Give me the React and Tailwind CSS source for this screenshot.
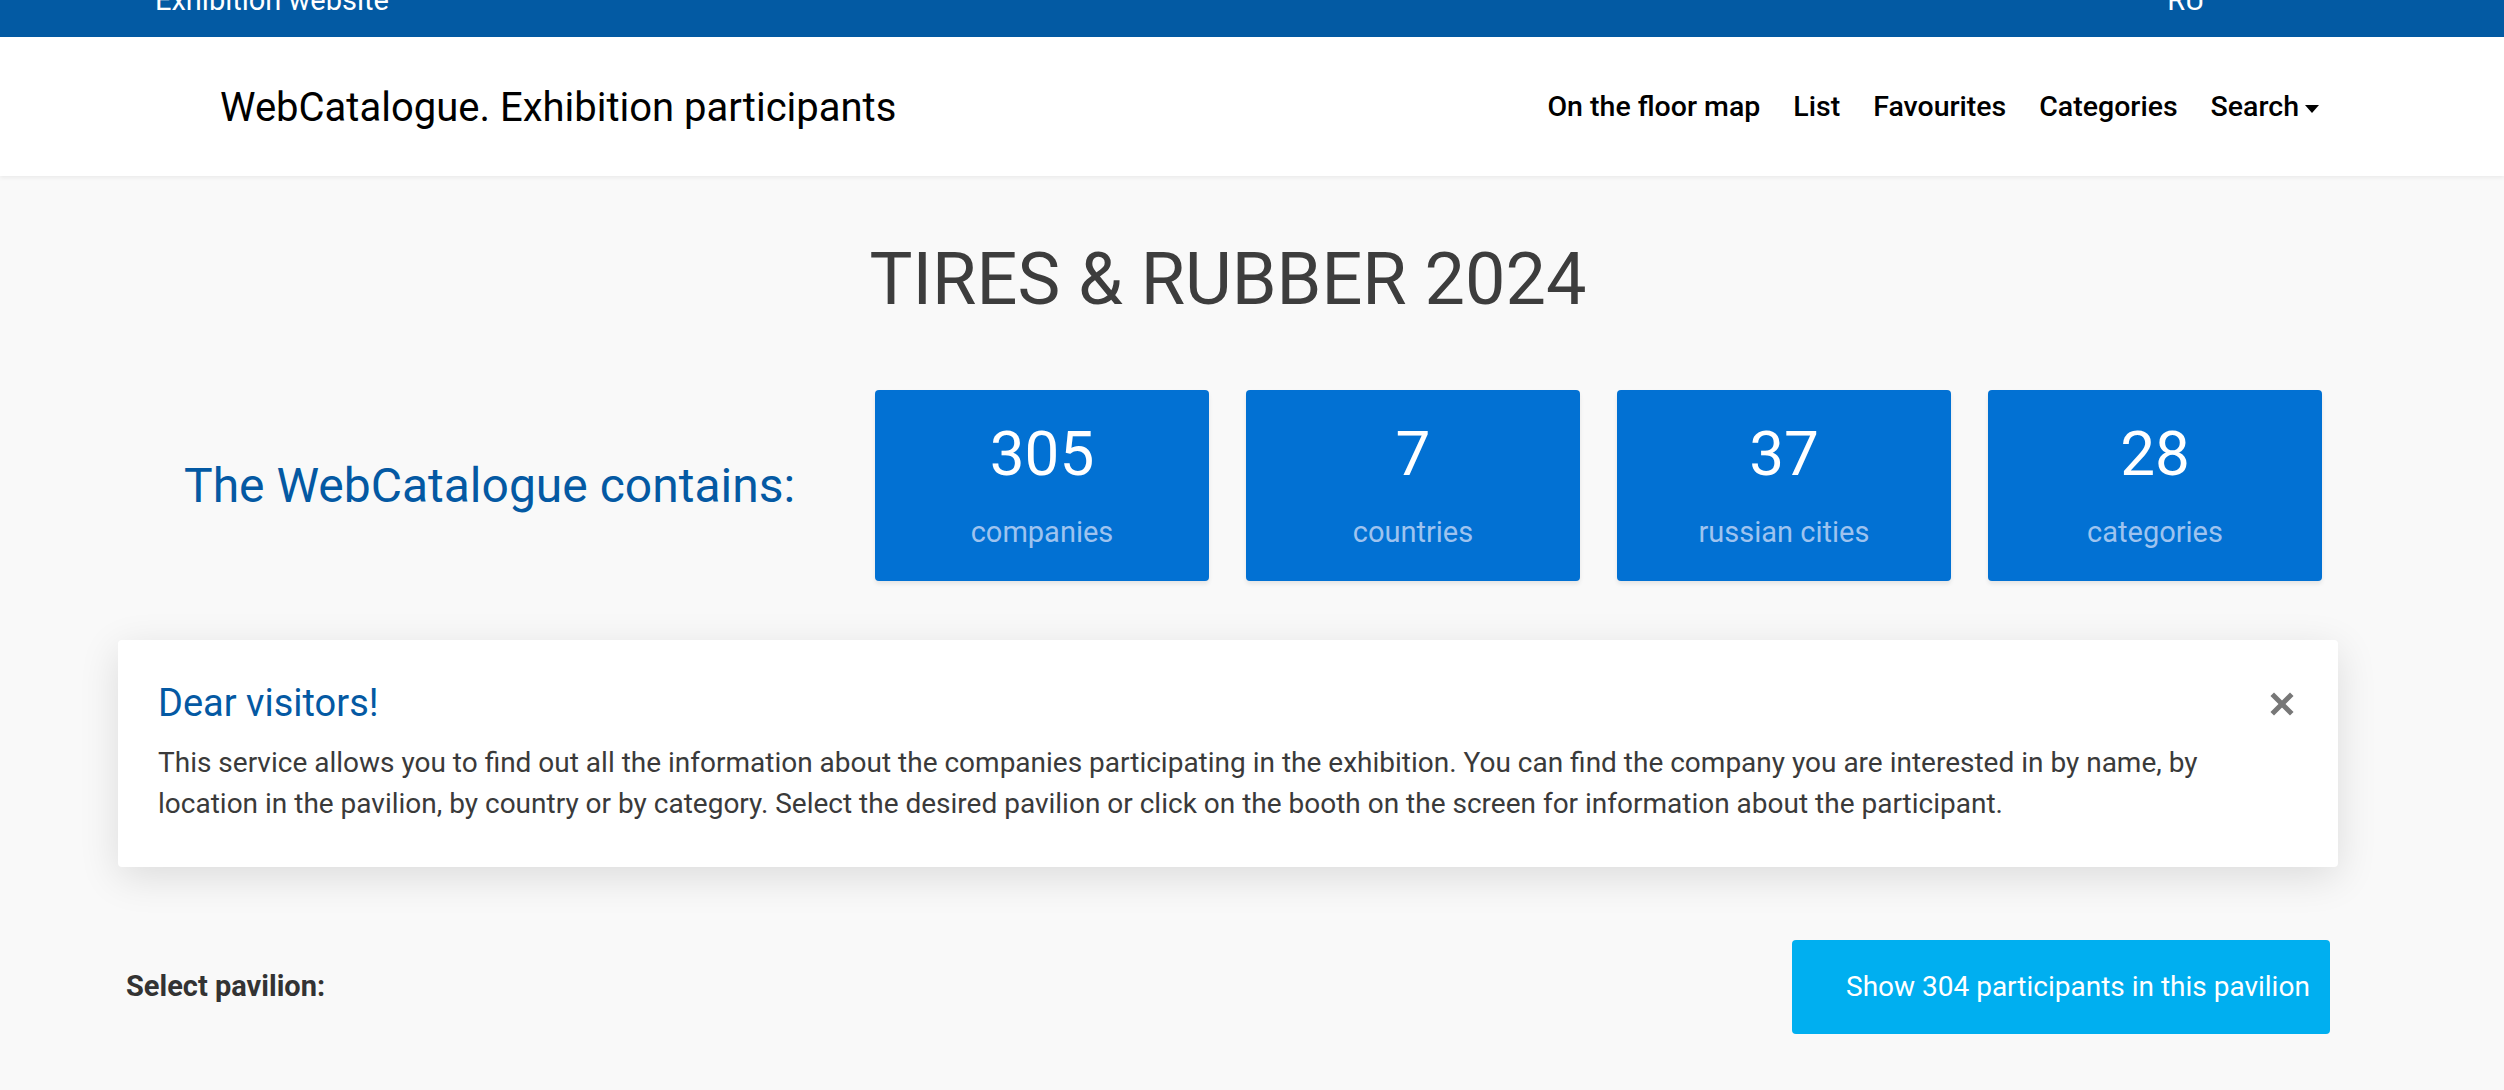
const stats = [
  { value: '305', label: 'companies' },
  { value: '7', label: 'countries' },
  { value: '37', label: 'russian cities' },
  { value: '28', label: 'categories' },
]

const navItems = ['On the floor map', 'List', 'Favourites', 'Categories']

export default function App() {
  return (
    <div
      className="h-[1090px] overflow-hidden bg-[#f9f9f9] text-[#333]"
      style={{ fontFamily: 'Roboto, "Noto Sans", sans-serif' }}
    >
      {/* top strip (page is scrolled a little) */}
      <div className="h-[37px] overflow-hidden bg-[#035aa3] text-white">
        <div className="-mt-[14px] flex pl-[155px] pr-[300px] text-[29px] leading-[28px]">
          <span>Exhibition website</span>
          <span className="ml-auto">RU</span>
        </div>
      </div>

      {/* navbar */}
      <nav className="relative z-10 flex h-[139px] items-center bg-white pl-[220px] pr-[185px] shadow-[0_2px_4px_rgba(0,0,0,0.06)]">
        <span className="mt-[2px] text-[40px] leading-none text-black">WebCatalogue. Exhibition participants</span>
        <div className="ml-auto mt-[2px] flex items-center gap-[33px] text-[28.5px] font-medium text-black">
          {navItems.map((item) => (
            <a key={item} href="#">{item}</a>
          ))}
          <a href="#" className="flex items-center gap-[6px]">
            Search
            <span className="mt-[2px] h-0 w-0 border-x-[7px] border-t-[8px] border-x-transparent border-t-black" />
          </a>
        </div>
      </nav>

      <main>
        <h1 className="mt-[61px] pr-[48px] text-center text-[72px] leading-[86px] text-[#3d3d3d]">
          TIRES &amp; RUBBER 2024
        </h1>

        {/* stats */}
        <div className="mt-[67px] flex items-center pl-[184px]">
          <div className="w-[691px] text-[48px] text-[#0459a3]">The WebCatalogue contains:</div>
          <div className="flex gap-[37px]">
            {stats.map((s) => (
              <div
                key={s.label}
                className="flex h-[191px] w-[334px] flex-col items-center rounded-[4px] bg-[#0271d3] pt-[26px] shadow-[0_3px_4px_rgba(0,0,0,0.08)]"
              >
                <span className="text-[62px] leading-[76px] text-white">{s.value}</span>
                <span className="mt-[22px] text-[29px] leading-[36px] text-[#9ec3ef]">{s.label}</span>
              </div>
            ))}
          </div>
        </div>

        {/* notice */}
        <div className="relative ml-[118px] mt-[59px] w-[2220px] rounded-[4px] bg-white pb-[43px] pl-[40px] pr-[120px] pt-[41px] shadow-[0_10px_40px_rgba(0,0,0,0.12)]">
          <h2 className="text-[38px] leading-[45px] text-[#0459a3]">Dear visitors!</h2>
          <p className="mt-[16px] text-[28px] leading-[41px] text-[#3a3a3a]">
            This service allows you to find out all the information about the companies participating in the exhibition. You can find the company you are interested in by name, by location in the pavilion, by country or by category. Select the desired pavilion or click on the booth on the screen for information about the participant.
          </p>
          <svg className="absolute right-[44px] top-[52px]" width="24" height="24" viewBox="0 0 24 24">
            <path d="M4 4 L20 20 M20 4 L4 20" stroke="#777" strokeWidth="5" strokeLinecap="square" />
          </svg>
        </div>

        {/* pavilion */}
        <div className="mt-[73px] flex items-center justify-between pl-[126px] pr-[174px]">
          <span className="text-[29px] font-bold text-[#333]">Select pavilion:</span>
          <button className="flex h-[94px] w-[538px] items-center whitespace-nowrap rounded-[4px] bg-[#00aff0] pl-[54px] text-[28px] text-white">
            Show 304 participants in this pavilion
          </button>
        </div>
      </main>
    </div>
  )
}
